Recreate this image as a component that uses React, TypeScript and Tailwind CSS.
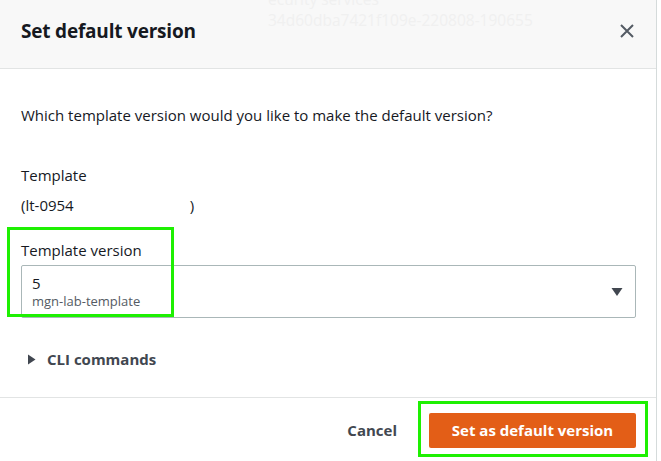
import React from "react";

export default function App() {
  return (
    <div
      className="w-[661px] h-[461px] bg-white flex overflow-hidden text-[#16191f]"
      style={{ fontFamily: '"Open Sans", "Noto Sans", Arial, sans-serif' }}
    >
      <div className="w-[657px] h-full border-r border-[#d5dbdb] flex flex-col">
        {/* Header */}
        <div className="relative h-[69px] shrink-0 bg-[#f8f8f8] border-b border-[#e2e4e4] flex items-center justify-between pl-[21px] pr-[21px]">
          <div className="absolute left-[268px] top-[-11px] text-[15.5px] leading-[21px] text-[#f0f0f0] select-none">
            <div>ecurity services</div>
            <div>34d60dba7421f109e-220808-190655</div>
          </div>
          <h1 className="relative text-[19px] font-bold leading-[22px] tracking-[-0.2px] mt-[-6px]">
            Set default version
          </h1>
          <svg className="relative mt-[-6px]" width="16" height="16" viewBox="0 0 16 16" fill="none">
            <path d="M2 2 L14 14 M14 2 L2 14" stroke="#545b64" strokeWidth="2" />
          </svg>
        </div>

        {/* Body */}
        <div className="flex-1 flex flex-col pl-[21px] pr-[20px] pt-[36px] text-[15px] leading-[20px]">
          <p>Which template version would you like to make the default version?</p>

          <div className="mt-[40px]">
            <div>Template</div>
            <div className="mt-[10px]">
              (lt-0954<span className="inline-block w-[116px]" />)
            </div>
          </div>

          <div className="relative mt-[25px]">
            <div className="absolute left-[-14px] top-[-13px] w-[167px] h-[90px] border-[3px] border-[#1ef002] pointer-events-none" />
            <div>Template version</div>
            <div className="mt-[5px] h-[53px] border border-[#aab7b8] rounded-[2px] flex items-center justify-between pl-[10px] pr-[12px]">
              <div className="flex flex-col">
                <span className="text-[15px] leading-[18px]">5</span>
                <span className="text-[13px] leading-[18px] text-[#545b64]">mgn-lab-template</span>
              </div>
              <svg width="12" height="10" viewBox="0 0 12 10">
                <path d="M0.5 1 L11.5 1 L6 9 Z" fill="#414750" />
              </svg>
            </div>
          </div>

          <div className="mt-[31px] flex items-center gap-[11px] pl-[6px]">
            <svg width="9" height="11" viewBox="0 0 9 11">
              <path d="M1 0.5 L8.5 5.5 L1 10.5 Z" fill="#414750" />
            </svg>
            <span className="font-bold text-[#414750]">CLI commands</span>
          </div>
        </div>

        {/* Footer */}
        <div className="h-[64px] shrink-0 border-t border-[#e2e4e4] flex items-start justify-end pr-[20px] pt-[15px]">
          <div className="flex items-center">
            <span className="text-[15px] font-bold text-[#414750] mr-[32px]">Cancel</span>
            <div className="relative">
              <div className="absolute left-[-11px] top-[-12px] w-[230px] h-[56px] border-[3px] border-[#1ef002] pointer-events-none" />
              <button className="w-[207px] h-[35px] bg-[#e35e17] rounded-[2px] text-white font-bold text-[15px]">
                Set as default version
              </button>
            </div>
          </div>
        </div>
      </div>
    </div>
  );
}
